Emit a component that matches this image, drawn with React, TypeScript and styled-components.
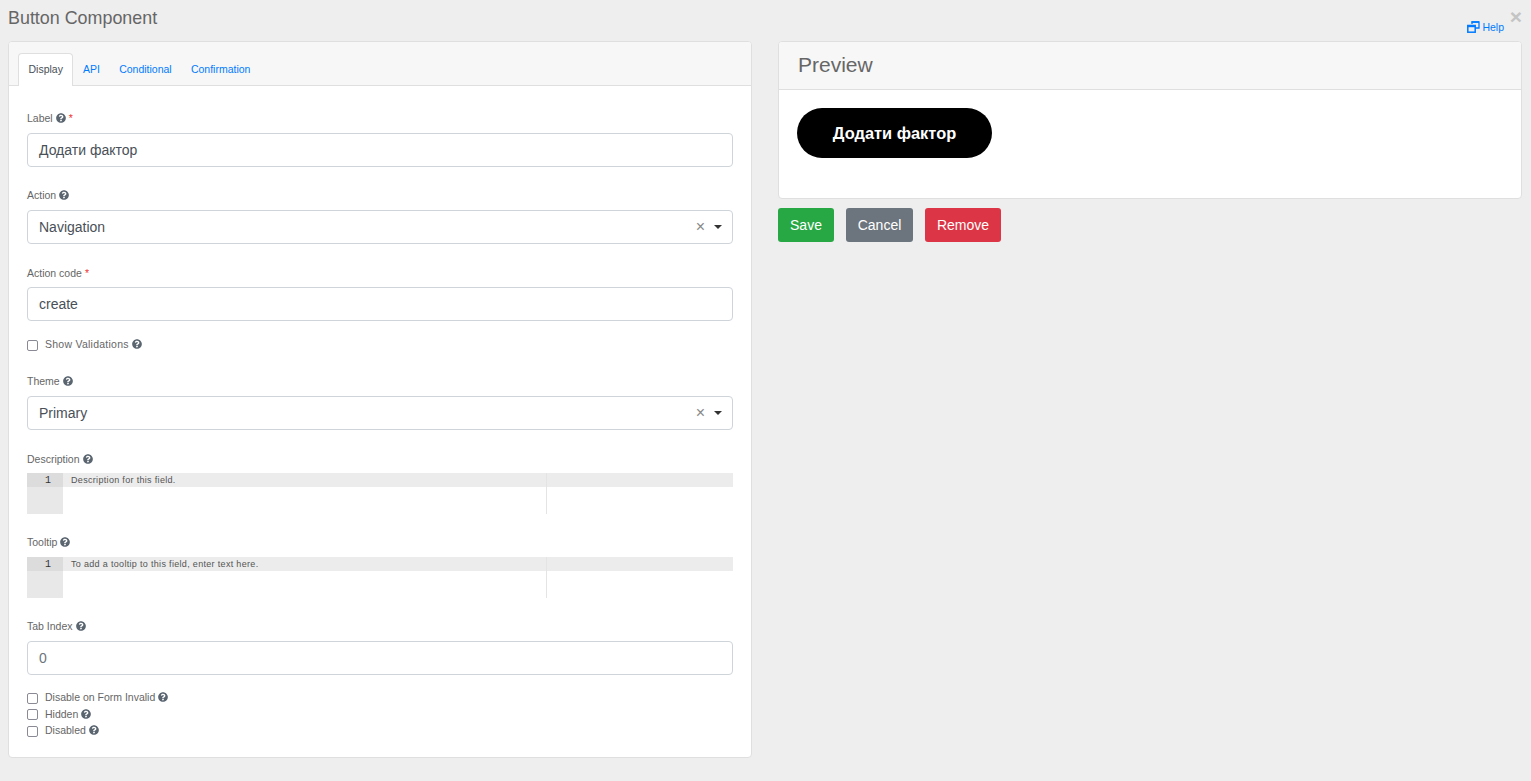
import React from 'react';
import styled, { createGlobalStyle } from 'styled-components';
import { FaQuestionCircle } from 'react-icons/fa';

const GlobalStyle = createGlobalStyle`
  html, body {
    margin: 0;
    padding: 0;
    background: #eeeeee;
    font-family: "Liberation Sans", Arial, sans-serif;
    color: #495057;
  }
  * {
    box-sizing: border-box;
  }
`;

const Page = styled.div`
  position: relative;
  width: 1531px;
  height: 781px;
  overflow: hidden;
  padding: 0 9px 0 8px;
`;

const TopBar = styled.div`
  height: 41px;
  display: flex;
  justify-content: space-between;
  align-items: flex-start;
`;

const Title = styled.div`
  font-size: 17.9px;
  line-height: 20px;
  margin-top: 8px;
  color: #666666;
`;

const CloseMark = styled.span`
  position: absolute;
  top: 6px;
  right: 9px;
  font-size: 21px;
  line-height: 21px;
  font-weight: bold;
  color: #c4c4c4;
`;

const HelpLink = styled.a`
  display: flex;
  align-items: center;
  gap: 2px;
  margin: 20px 18px 0 0;
  font-size: 10.5px;
  line-height: 14px;
  color: #007bff;
`;

const Columns = styled.div`
  display: grid;
  grid-template-columns: 744px 744px;
  gap: 26px;
  align-items: start;
`;

const Card = styled.div`
  background: #ffffff;
  border: 1px solid #dfdfdf;
  border-radius: 4px;
  overflow: hidden;
`;

const TabHeader = styled.div`
  height: 44px;
  padding: 11px 9px 0;
  display: flex;
  background: #f7f7f7;
  border-bottom: 1px solid #dfdfdf;
`;

const Tab = styled.div<{ $active?: boolean }>`
  height: 33px;
  padding: 0 ${(p) => (p.$active ? 9.5 : 8.6)}px;
  font-size: 10.5px;
  line-height: 30px;
  border-radius: 4px 4px 0 0;
  border: 1px solid ${(p) => (p.$active ? '#dfdfdf' : 'transparent')};
  border-bottom: 0;
  background: ${(p) => (p.$active ? '#ffffff' : 'transparent')};
  color: ${(p) => (p.$active ? '#495057' : '#007bff')};
`;

const FormBody = styled.div`
  padding: 25px 18px 19px;
`;

const Field = styled.div<{ $last?: boolean }>`
  margin-bottom: ${(p) => (p.$last ? 0 : 21)}px;
`;

const Label = styled.label<{ $raise?: boolean; $lower?: boolean }>`
  display: flex;
  align-items: center;
  height: 15px;
  margin-bottom: 7px;
  padding: ${(p) => (p.$lower ? 2 : 0)}px 0 ${(p) => (p.$raise ? 2 : 0)}px;
  font-size: 10.5px;
  color: #666666;
`;

const Required = styled.span`
  color: #ee3333;
  margin-left: 3px;
  font-size: 10.5px;
`;

const Help = styled(FaQuestionCircle)`
  width: 10px;
  height: 10px;
  margin-left: 3px;
  color: #5a6570;
`;

const Input = styled.div<{ $muted?: boolean }>`
  height: 34px;
  padding: 0 11px;
  display: flex;
  align-items: center;
  font-size: 14px;
  border: 1px solid #ced4da;
  border-radius: 4px;
  background: #ffffff;
  color: ${(p) => (p.$muted ? '#6c757d' : '#495057')};
`;

const SelectBox = styled(Input)`
  justify-content: space-between;
`;

const SelectControls = styled.span`
  display: flex;
  align-items: center;
  gap: 9px;
  margin-right: -1px;
`;

const ClearMark = styled.span`
  font-size: 16px;
  color: #888888;
  line-height: 16px;
`;

const Caret = styled.span`
  width: 0;
  height: 0;
  border-left: 4.5px solid transparent;
  border-right: 4.5px solid transparent;
  border-top: 4.5px solid #333333;
`;

const CheckRow = styled.label<{ $wide?: boolean }>`
  display: flex;
  align-items: center;
  height: 16.5px;
  font-size: 10.5px;
  letter-spacing: ${(p) => (p.$wide ? 0.25 : 0)}px;
  color: #666666;
`;

const CheckBox = styled.span`
  width: 11px;
  height: 11px;
  margin: 2px 7px 0 0;
  border: 1px solid #8a8a94;
  border-radius: 2px;
  background: #ffffff;
`;

const CheckGroup = styled.div<{ $after?: number }>`
  margin-top: ${(p) => (p.$after ? -6 : 14.3)}px;
  margin-bottom: ${(p) => p.$after ?? 0}px;
`;

const Editor = styled.div`
  position: relative;
  display: grid;
  grid-template-columns: 36px 1fr;
  height: 41px;
  background: #ffffff;
`;

const Gutter = styled.div`
  background: #e8e8e8;
`;

const GutterCell = styled.div`
  height: 14px;
  padding-right: 12px;
  background: #dcdcdc;
  text-align: right;
  font-family: "Liberation Mono", monospace;
  font-size: 10px;
  line-height: 15px;
  color: #333333;
`;

const EditorLine = styled.div`
  height: 14px;
  padding-left: 8px;
  background: #ececec;
  font-size: 9px;
  letter-spacing: 0.32px;
  line-height: 15px;
  color: #555555;
  white-space: nowrap;
`;

const PrintMargin = styled.div`
  position: absolute;
  left: 519px;
  top: 0;
  bottom: 0;
  width: 1px;
  background: #e4e4e4;
`;

const PreviewHeader = styled.div`
  height: 48px;
  padding: 0 19px 2px;
  display: flex;
  align-items: center;
  font-size: 21px;
  color: #666666;
  background: #f7f7f7;
  border-bottom: 1px solid #dfdfdf;
`;

const PreviewBody = styled.div`
  height: 108px;
  padding: 18px;
`;

const PillButton = styled.div`
  display: inline-block;
  width: 195px;
  height: 50px;
  border-radius: 25px;
  background: #000000;
  color: #ffffff;
  font-size: 16.4px;
  font-weight: bold;
  line-height: 51px;
  text-align: center;
`;

const Actions = styled.div`
  display: flex;
  gap: 12px;
  margin-top: 9px;
`;

const ActionButton = styled.div<{ $bg: string; $width: number }>`
  width: ${(p) => p.$width}px;
  height: 34px;
  font-size: 14px;
  line-height: 34px;
  text-align: center;
  color: #ffffff;
  border-radius: 3px;
  background: ${(p) => p.$bg};
`;

const HelpIcon = () => (
  <svg width="13" height="12" viewBox="0 0 13 12" fill="none" stroke="#007bff">
    <path d="M5 3V1h7v6h-3.5" strokeWidth="1.3" />
    <path d="M4.5 1H12" strokeWidth="1.6" />
    <rect x="0.8" y="4.5" width="7.4" height="6.7" strokeWidth="1.5" />
    <path d="M0.5 5.2H8.5" strokeWidth="2" />
  </svg>
);

const Select = ({ value }: { value: string }) => (
  <SelectBox>
    {value}
    <SelectControls>
      <ClearMark>×</ClearMark>
      <Caret />
    </SelectControls>
  </SelectBox>
);

const CodeEditor = ({ text }: { text: string }) => (
  <Editor>
    <Gutter>
      <GutterCell>1</GutterCell>
    </Gutter>
    <EditorLine>{text}</EditorLine>
    <PrintMargin />
  </Editor>
);

export default function App() {
  return (
    <Page>
      <GlobalStyle />
      <CloseMark>×</CloseMark>
      <TopBar>
        <Title>Button Component</Title>
        <HelpLink>
          <HelpIcon />
          Help
        </HelpLink>
      </TopBar>
      <Columns>
        <Card>
          <TabHeader>
            <Tab $active>Display</Tab>
            <Tab>API</Tab>
            <Tab>Conditional</Tab>
            <Tab>Confirmation</Tab>
          </TabHeader>
          <FormBody>
            <Field>
              <Label $raise>
                Label <Help /> <Required>*</Required>
              </Label>
              <Input>Додати фактор</Input>
            </Field>
            <Field>
              <Label $raise>
                Action <Help />
              </Label>
              <Select value="Navigation" />
            </Field>
            <Field>
              <Label>
                Action code <Required>*</Required>
              </Label>
              <Input>create</Input>
            </Field>
            <CheckGroup $after={21}>
              <CheckRow $wide>
                <CheckBox />
                Show Validations <Help />
              </CheckRow>
            </CheckGroup>
            <Field>
              <Label>
                Theme <Help />
              </Label>
              <Select value="Primary" />
            </Field>
            <Field>
              <Label $lower>
                Description <Help />
              </Label>
              <CodeEditor text="Description for this field." />
            </Field>
            <Field>
              <Label>
                Tooltip <Help />
              </Label>
              <CodeEditor text="To add a tooltip to this field, enter text here." />
            </Field>
            <Field $last>
              <Label>
                Tab Index <Help />
              </Label>
              <Input $muted>0</Input>
            </Field>
            <CheckGroup>
              <CheckRow>
                <CheckBox />
                Disable on Form Invalid <Help />
              </CheckRow>
              <CheckRow>
                <CheckBox />
                Hidden <Help />
              </CheckRow>
              <CheckRow>
                <CheckBox />
                Disabled <Help />
              </CheckRow>
            </CheckGroup>
          </FormBody>
        </Card>
        <div>
          <Card>
            <PreviewHeader>Preview</PreviewHeader>
            <PreviewBody>
              <PillButton>Додати фактор</PillButton>
            </PreviewBody>
          </Card>
          <Actions>
            <ActionButton $bg="#28a745" $width={56}>Save</ActionButton>
            <ActionButton $bg="#6c757d" $width={67}>Cancel</ActionButton>
            <ActionButton $bg="#dc3545" $width={76}>Remove</ActionButton>
          </Actions>
        </div>
      </Columns>
    </Page>
  );
}
